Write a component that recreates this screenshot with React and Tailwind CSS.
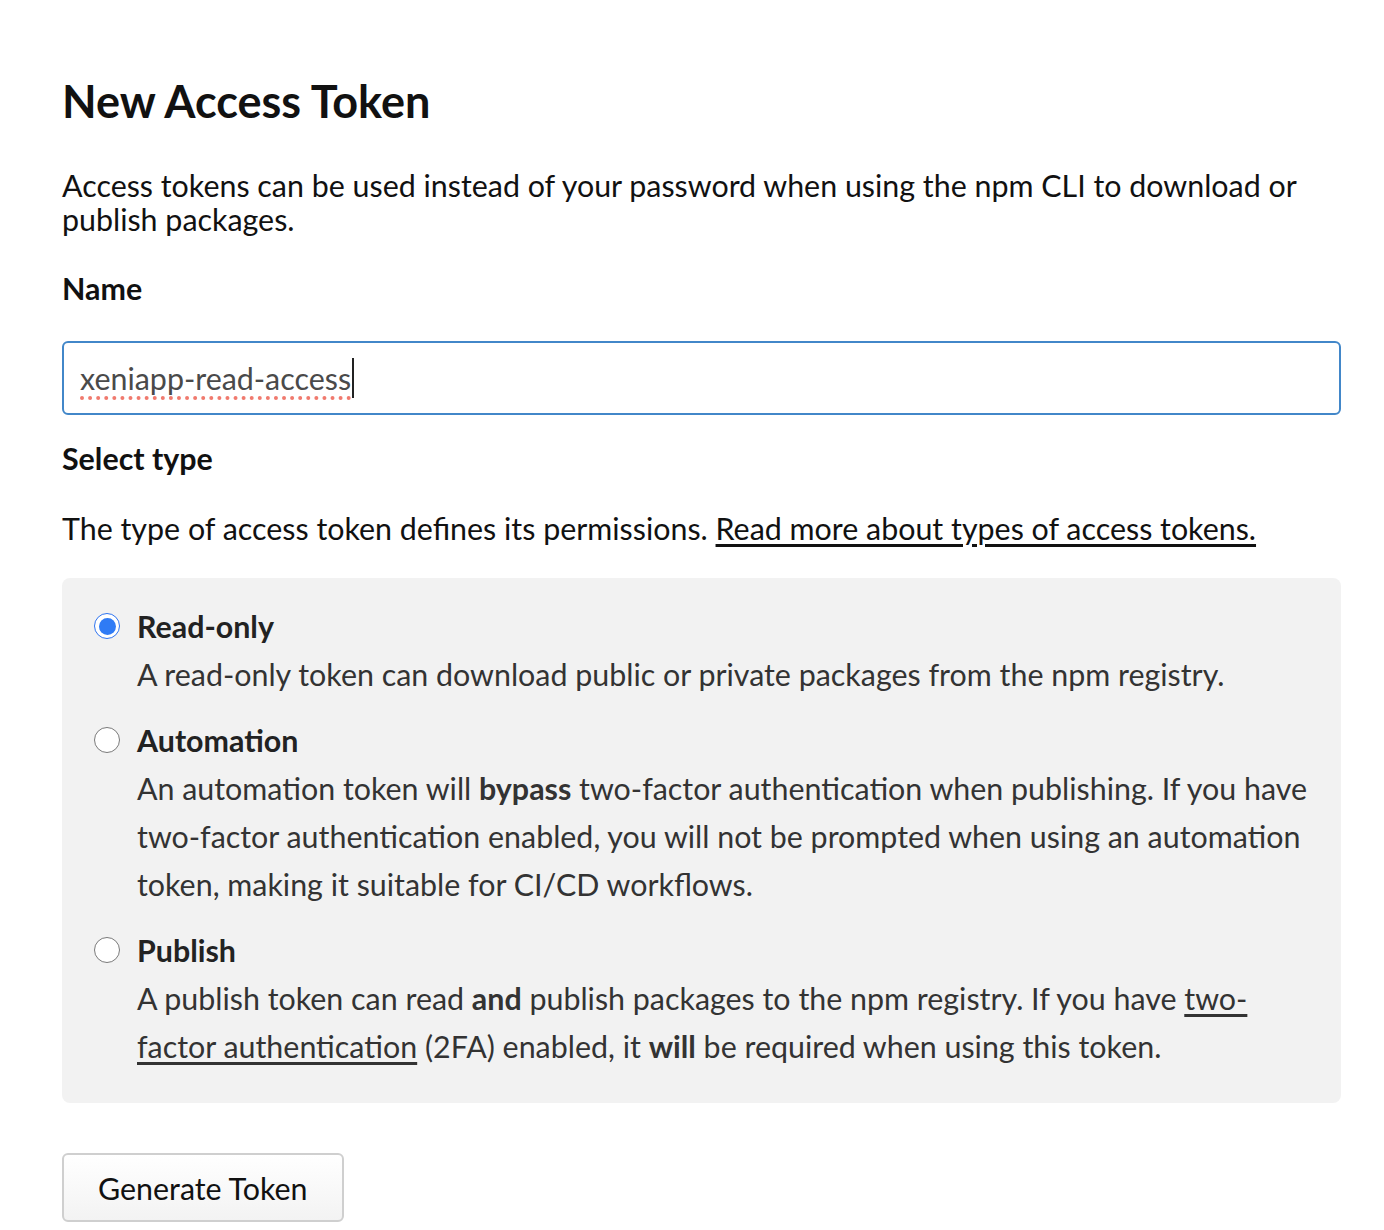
function Radio({ checked }) {
  if (checked) {
    return (
      <span className="flex h-[26px] w-[26px] shrink-0 items-center justify-center rounded-full border-[1.5px] border-[#2f74f0] bg-white">
        <span className="h-[17px] w-[17px] rounded-full bg-[#2f7bf5]" />
      </span>
    );
  }
  return <span className="h-[26px] w-[26px] shrink-0 rounded-full border-[1.5px] border-[#7a7a7a] bg-white" />;
}

function Option({ checked, label, children }) {
  return (
    <div>
      <div className="flex h-[48px] items-center gap-[17px]">
        <Radio checked={checked} />
        <span className="text-[30.4px] font-bold leading-[48px] text-[#222]">{label}</span>
      </div>
      <p className="pl-[43px] text-[30.4px] leading-[48px] text-[#333] whitespace-nowrap">{children}</p>
    </div>
  );
}

export default function App() {
  return (
    <div className="min-h-[1230px] bg-white pl-[62px] pr-[43px] pt-[74px] text-[#111]" style={{ fontFamily: 'Lato, sans-serif' }}>
      <h1 className="text-[45px] font-bold leading-[54px]">New Access Token</h1>

      <p className="mt-[40px] text-[30.4px] leading-[34px]">
        Access tokens can be used instead of your password when using the npm CLI to download or
        <br />
        publish packages.
      </p>

      <div className="mt-[34px] text-[30.4px] font-bold leading-[36px]">Name</div>

      {/* campo de nome, com o cursor depois do texto */}
      <div className="mt-[35px] flex h-[74px] items-center rounded-md border-2 border-[#4287c9] pl-[16px]">
        <span className="text-[30.4px] leading-[36px] text-[#4a4a4a] underline decoration-dotted decoration-[#f07a6e] decoration-[4px] underline-offset-[6px]">
          xeniapp-read-access
        </span>
        <span className="ml-px h-[40px] w-[2px] bg-[#222]" />
      </div>

      <div className="mt-[25px] text-[30.4px] font-bold leading-[36px]">Select type</div>

      <p className="mt-[34px] text-[30.4px] leading-[36px]">
        The type of access token defines its permissions.{' '}
        <a href="#" className="underline underline-offset-[4px]">Read more about types of access tokens.</a>
      </p>

      <div className="mt-[32px] flex flex-col gap-[18px] rounded-lg bg-[#f2f2f2] pb-[33px] pl-[32px] pr-[20px] pt-[24px]">
        <Option checked label="Read-only">
          A read-only token can download public or private packages from the npm registry.
        </Option>
        <Option label="Automation">
          An automation token will <b>bypass</b> two-factor authentication when publishing. If you have
          <br />
          two-factor authentication enabled, you will not be prompted when using an automation
          <br />
          token, making it suitable for CI/CD workflows.
        </Option>
        <Option label="Publish">
          A publish token can read <b>and</b> publish packages to the npm registry. If you have{' '}
          <a href="#" className="underline underline-offset-[4px]">
            two-
            <br />
            factor authentication
          </a>{' '}
          (2FA) enabled, it <b>will</b> be required when using this token.
        </Option>
      </div>

      <button className="mt-[50px] h-[69px] rounded-md border-2 border-[#cfcfcf] bg-gradient-to-b from-white to-[#f3f3f3] px-[34px] text-[30.4px] leading-[36px] text-[#111]">
        Generate Token
      </button>
    </div>
  );
}
